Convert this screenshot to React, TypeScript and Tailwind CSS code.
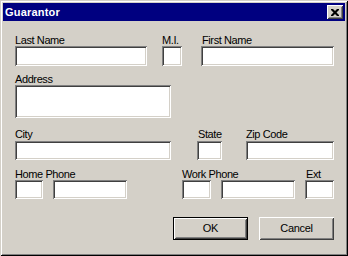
const raised =
  'shadow-[inset_1px_1px_#ffffff,inset_-1px_-1px_#404040,inset_2px_2px_#d4d0c8,inset_-2px_-2px_#808080]';
const sunken =
  'bg-white shadow-[inset_1px_1px_#808080,inset_-1px_-1px_#ffffff,inset_2px_2px_#404040,inset_-2px_-2px_#d4d0c8]';

function Field({ w, h = 'h-[20px]' }: { w: string; h?: string }) {
  return <div className={`${sunken} ${w} ${h}`} />;
}

function Label({ children, className = '' }: { children: React.ReactNode; className?: string }) {
  return (
    <div className={`h-[12px] leading-[12px] tracking-[-0.4px] whitespace-nowrap ${className}`}>{children}</div>
  );
}

export default function App() {
  return (
    <div
      className="w-[348px] h-[256px] bg-[#d4d0c8] p-[3px] text-[11px] text-black shadow-[inset_1px_1px_#d4d0c8,inset_-1px_-1px_#000000,inset_2px_2px_#ffffff,inset_-2px_-2px_#808080]"
      style={{ fontFamily: '"Liberation Sans", Arial, sans-serif' }}
    >
      {/* title bar */}
      <div className="h-[18px] bg-[#000080] flex items-center justify-between pl-[2px] pr-[2px]">
        <span className="text-white font-bold leading-[18px] tracking-[0.2px]">Guarantor</span>
        <div className={`${raised} bg-[#d4d0c8] w-[16px] h-[14px] flex items-center justify-center`}>
          <svg width="8" height="7" viewBox="0 0 8 7">
            <path d="M0 0h2l2 2 2-2h2v1l-2.5 2.5L8 6v1H6L4 5 2 7H0V6l2.5-2.5L0 1z" fill="#000" />
          </svg>
        </div>
      </div>

      <div className="pl-[12px] pt-[13px]">
        {/* Last / MI / First */}
        <div className="flex">
          <div className="w-[132px]">
            <Label>Last Name</Label>
            <Field w="w-[132px]" />
          </div>
          <div className="ml-[15px] w-[20px]">
            <Label>M.I.</Label>
            <Field w="w-[20px]" />
          </div>
          <div className="ml-[19px] w-[133px]">
            <Label className="pl-[1px]">First Name</Label>
            <Field w="w-[133px]" />
          </div>
        </div>

        {/* Address */}
        <div className="mt-[7px]">
          <Label>Address</Label>
          <Field w="w-[156px]" h="h-[33px]" />
        </div>

        {/* City / State / Zip */}
        <div className="flex mt-[10px]">
          <div className="w-[156px]">
            <Label>City</Label>
            <div className="mt-[1px]"><Field w="w-[156px]" h="h-[19px]" /></div>
          </div>
          <div className="ml-[26px] w-[25px]">
            <Label className="pl-[1px]">State</Label>
            <div className="mt-[1px]"><Field w="w-[25px]" h="h-[19px]" /></div>
          </div>
          <div className="ml-[24px] w-[88px]">
            <Label>Zip Code</Label>
            <div className="mt-[1px]"><Field w="w-[88px]" h="h-[19px]" /></div>
          </div>
        </div>

        {/* Phones */}
        <div className="flex mt-[8px]">
          <div className="w-[112px]">
            <Label>Home Phone</Label>
            <div className="flex gap-[10px]">
              <Field w="w-[28px]" h="h-[19px]" />
              <Field w="w-[74px]" h="h-[19px]" />
            </div>
          </div>
          <div className="ml-[55px] w-[113px]">
            <Label>Work Phone</Label>
            <div className="flex gap-[10px]">
              <Field w="w-[29px]" h="h-[19px]" />
              <Field w="w-[74px]" h="h-[19px]" />
            </div>
          </div>
          <div className="ml-[10px] w-[29px]">
            <Label className="pl-[1px]">Ext</Label>
            <Field w="w-[29px]" h="h-[19px]" />
          </div>
        </div>

        {/* Buttons */}
        <div className="flex mt-[18px] pl-[158px] gap-[11px]">
          <div className="w-[75px] h-[23px] border border-black">
            <div className={`${raised} w-full h-full flex items-center justify-center tracking-[-0.3px]`}>OK</div>
          </div>
          <div className={`${raised} w-[75px] h-[23px] flex items-center justify-center tracking-[-0.3px]`}>
            Cancel
          </div>
        </div>
      </div>
    </div>
  );
}
